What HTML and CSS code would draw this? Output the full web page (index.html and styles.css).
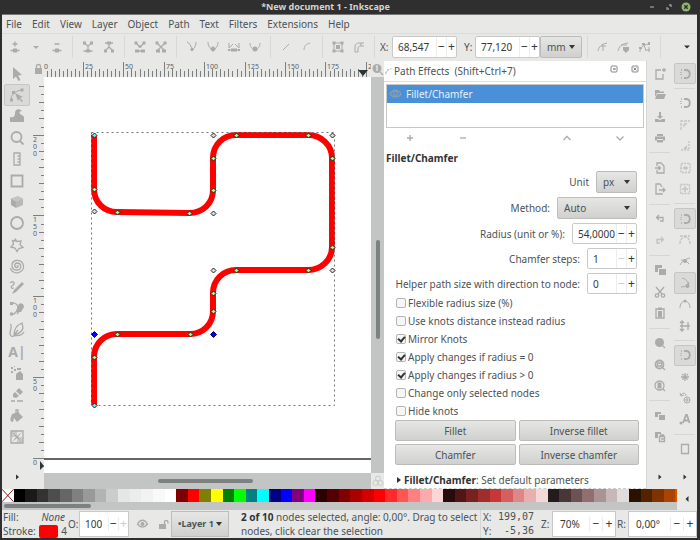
FILE: index.html
```
<!DOCTYPE html>
<html lang="en">
<head>
    <meta charset="UTF-8" />
    <meta name="viewport" content="width=device-width, initial-scale=1" />
    <title>*New document 1 - Inkscape</title>
    <link rel="stylesheet" href="styles.css">
</head>
<body>
<div class="window">

    <header class="titlebar">
        <h1>*New document 1 - Inkscape</h1>
        <div class="window-buttons">
            <button aria-label="Minimize"><svg class="icon" viewBox="0 0 16 16"><path d="M6 8h4" /></svg></button>
            <button aria-label="Restore"><svg class="icon" viewBox="0 0 16 16"><path d="M8 6h2v2M6 8v2h2" /></svg></button>
            <button aria-label="Close"><svg class="icon" viewBox="0 0 16 16"><circle cx="8" cy="8" r="4.5" fill="#8fb573" stroke="none" /><path d="M6.300 6.300l3.400 3.400M9.700 6.300L6.300 9.700" stroke="#2e2e2e" /></svg></button>
        </div>
    </header>

    <nav class="menubar">
        <a href="#">File</a>
        <a href="#">Edit</a>
        <a href="#">View</a>
        <a href="#">Layer</a>
        <a href="#">Object</a>
        <a href="#">Path</a>
        <a href="#">Text</a>
        <a href="#">Filters</a>
        <a href="#">Extensions</a>
        <a href="#">Help</a>
    </nav>

    <!-- Node tool controls -->
    <div class="toolbar">
        <button aria-label="Insert node"><svg class="icon" viewBox="0 0 16 16"><path d="M8 2.500v5M5.500 5h5M3.500 11.500h9" /><path class="fill" d="M6 9.500h4v4H6z" /></svg></button>
        <button aria-label="Insert node options"><svg class="icon" viewBox="0 0 16 16"><path class="fill" d="M5 7h6l-3 3z" /></svg></button>
        <button aria-label="Delete node"><svg class="icon" viewBox="0 0 16 16"><path d="M5.500 5h5M3.500 11.500h9" /><path class="fill" d="M6 9.500h4v4H6z" /></svg></button>
        <span class="sep"></span>
        <button aria-label="Join nodes"><svg class="icon" viewBox="0 0 16 16"><path d="M4 4l4 3 4-3M8 7v4M3.500 12h9" /><path class="fill" d="M3 2.500h3v3H3zM10 2.500h3v3h-3zM6 10.500h4v3H6z" /></svg></button>
        <button aria-label="Break path"><svg class="icon" viewBox="0 0 16 16"><path d="M4 12l4-4 4 4M8 8V5M4 4h8" /><path class="fill" d="M6 2.500h4v3H6zM3 10.500h3v3H3zM10 10.500h3v3h-3z" /></svg></button>
        <span class="sep"></span>
        <button aria-label="Join with segment"><svg class="icon" viewBox="0 0 16 16"><path d="M4 4l4 4 4-4M3 12h10M8 8v1" /><path class="fill" d="M2.500 2.500h3v3h-3zM10.500 2.500h3v3h-3zM3 10.500h4v3H3zM9 10.500h4v3H9zM6.500 6.500h3v2h-3z" /></svg></button>
        <button aria-label="Delete segment"><svg class="icon" viewBox="0 0 16 16"><path d="M4 4l4 4 4-4M8 8l-4 4M8 8l4 4" /><path class="fill" d="M2.500 2.500h3v3h-3zM10.500 2.500h3v3h-3zM3 10.500h4v3H3zM9 10.500h4v3H9z" /></svg></button>
        <span class="sep"></span>
        <button aria-label="Corner node"><svg class="icon thin" viewBox="0 0 16 16"><path d="M3 3c3 1 4 4 5 8 3-2 4-5 4-8" /><path class="fill" d="M8 8.500l2 2-2 2-2-2z" /></svg></button>
        <button aria-label="Smooth node"><svg class="icon thin" viewBox="0 0 16 16"><path d="M3 3c0 4 2 7 5 7s5-3 5-7" /><path class="fill" d="M8 7l3 3-3 3-3-3z" /></svg></button>
        <button aria-label="Symmetric node"><svg class="icon thin" viewBox="0 0 16 16"><path d="M3 4v5l4-4M13 4v5L9 5M3 11h10" /><path class="fill" d="M5 9.500h6v3H5zM2 10h2v2H2zM12 10h2v2h-2z" /></svg></button>
        <button aria-label="Auto-smooth node"><svg class="icon thin" viewBox="0 0 16 16"><path d="M3 4c0 4 2 6 5 6s5-2 5-6" /><circle class="fill" cx="8" cy="10" r="2.500" /></svg></button>
        <span class="sep"></span>
        <button aria-label="Make line"><svg class="icon thin" viewBox="0 0 16 16"><path d="M5 11l6-6" /></svg></button>
        <button aria-label="Make curve"><svg class="icon thin" viewBox="0 0 16 16"><path d="M5 11c0-4 2-6 6-7" /></svg></button>
        <span class="sep"></span>
        <button aria-label="Object to path"><svg class="icon thin" viewBox="0 0 16 16"><path d="M4 4h8v8H4z" /><path class="fill" d="M6 6h4v4H6zM2.500 2.500h3v3h-3zM10.500 2.500h3v3h-3zM2.500 10.500h3v3h-3zM10.500 10.500h3v3h-3z" /></svg></button>
        <button aria-label="Stroke to path"><svg class="icon thin" viewBox="0 0 16 16"><path d="M4 13V8c0-3 2-4 4-4h5M7 13V9c0-1 1-2 2-2h4M4 13h3M10 4v3" /></svg></button>
        <span class="sep"></span>
        <label for="x">X:</label>
        <span class="spin spin-coord"><input type="text" id="x" value="68,547"><button aria-label="Less">−</button><button aria-label="More">+</button></span>
        <label for="y" class="label-y">Y:</label>
        <span class="spin spin-coord"><input type="text" id="y" value="77,120"><button aria-label="Less">−</button><button aria-label="More">+</button></span>
        <span class="combo combo-unit"><select aria-label="Unit"><option>mm</option></select></span>
        <span class="sep"></span>
        <button aria-label="Edit clip"><svg class="icon thin" viewBox="0 0 16 16"><path d="M3 12c1-4 3-7 9-8M8 6v6M6 7h5" /></svg></button>
        <button aria-label="Edit mask"><svg class="icon thin" viewBox="0 0 16 16"><path d="M2 12c1-4 3-7 10-8M5 6h6" /><path class="fill" d="M7 8h6v3l-3 3-3-3z" /></svg></button>
        <button aria-label="Next effect parameter"><svg class="icon thin" viewBox="0 0 16 16"><path d="M3 13c0-4 2-7 9-8M7 6l2 6M9 11h4M12 8v5" /><path class="fill" d="M2 8h3v2H2zM5 4h3v2H5zM11 3h2v3h-2z" /></svg></button>
        <span class="sep"></span>
        <button class="overflow" aria-label="More options"><svg class="icon" viewBox="0 0 16 16"><path class="fill" d="M5 6.500h6l-3 3z" /></svg></button>
    </div>

    <main class="workspace">

        <nav class="rail tools">
            <div class="rail-list">
                <button aria-label="Select"><svg class="icon" viewBox="0 0 16 16"><path class="fill" d="M4 1l9 8-4 .500 2.500 4.500-2 1L7 10.500 4 13z" /></svg></button>
                <button class="pressed" aria-label="Edit nodes"><svg class="icon thin" viewBox="0 0 16 16"><path d="M2 13C2 8 5 4 13 3" /><path class="fill" d="M6 6l8 4-3 1 3 3-1 1-3-3-1 2zM11.500 1.500h3v3h-3zM1 11.500h3v3H1zM3 4h3v3H3z" /></svg></button>
                <button aria-label="Tweak"><svg class="icon" viewBox="0 0 16 16"><path class="fill" d="M1 9c4 1 5-1 5-4 0-4 4-5 7-2-2 0-3 1-2 3 1 1 3 1 4 3v5H1z" /></svg></button>
                <button aria-label="Zoom"><svg class="icon bold" viewBox="0 0 16 16"><circle cx="7.500" cy="7" r="5" /><path d="M11 11l3.500 3.500" /></svg></button>
                <button aria-label="Measure"><svg class="icon" viewBox="0 0 16 16"><path d="M5 2h6v12H5zM8.500 5H11M8.500 8H11M8.500 11H11" /></svg></button>
                <button aria-label="Rectangle"><svg class="icon bold" viewBox="0 0 16 16"><path d="M2.500 2.500h11v11h-11z" /></svg></button>
                <button aria-label="3D box"><svg class="icon" viewBox="0 0 16 16"><path class="fill" opacity=".6" d="M2 4.500L9 2l5 2.500L7 7.500z" /><path class="fill" d="M2 4.500l5 3V14l-5-3z" /><path class="fill" opacity=".8" d="M7 7.500l7-3V11l-7 3z" /></svg></button>
                <button aria-label="Ellipse"><svg class="icon bold" viewBox="0 0 16 16"><circle cx="8" cy="8" r="6" /></svg></button>
                <button aria-label="Star"><svg class="icon" viewBox="0 0 16 16"><path d="M6 1.500l2 3 4-.500-1 3.500 3 3-4 1-2 3-2-3.500-4-1 2.500-3-1-3.500 3 .500z" /></svg></button>
                <button aria-label="Spiral"><svg class="icon" viewBox="0 0 16 16"><path d="M8 8c1-1 2 1 0 1.500-3 0-3-4 0-4.500 5 0 5 7 0 7-6 0-7-8-1-9.500 8-1 10 9 4 11.500-4 2-9 0-9.500-4" /></svg></button>
                <button aria-label="Pencil"><svg class="icon" viewBox="0 0 16 16"><path d="M1 3c2-3 6 0 3 2s-2 4 1 3" /><path class="fill" d="M13 2l2 2-8 8-4 2 2-4z" /></svg></button>
                <button aria-label="Pen"><svg class="icon" viewBox="0 0 16 16"><path d="M2 2h3c7 2 3 9 0 11H2" /><path class="fill" d="M1 1h3v3H1zM1 11.500h3v3H1zM10 3c2-2 5 0 5 3l-3 5H8V7z" /><path d="M8 13l3-4" /></svg></button>
                <button aria-label="Calligraphy"><svg class="icon" viewBox="0 0 16 16"><path d="M1 2c3 1 0 6 0 9s2 4 4 3c3-1 7 1 10-4M5 13c0-6 3-10 8-12l1 5c-1 4-5 6-9 7zM5 13l4-5" /></svg></button>
                <button class="text-tool" aria-label="Text">A|</button>
                <button aria-label="Spray"><svg class="icon" viewBox="0 0 16 16"><path class="fill" d="M7 9l4-3 3 3v6H7zM8 3h4v2H8zM2 2h2v2H2zM5 4h2v2H5zM2 6h2v2H2zM5 1h1v1H5z" /></svg></button>
                <button aria-label="Eraser"><svg class="icon" viewBox="0 0 16 16"><path class="fill" d="M10 1l4 4-3 3-4-4zM6 5l4 4-3 2-3-1V7z" /><path d="M2 14h4M8 14h6" /></svg></button>
                <button aria-label="Paint bucket"><svg class="icon" viewBox="0 0 16 16"><path class="fill" d="M3 6l6-2 5 5-6 5-3-4-1 4c-3 0-3-3-2-5z" /><path d="M7 7V2h2v5" /></svg></button>
                <button aria-label="Gradient"><svg class="icon" viewBox="0 0 16 16"><path d="M2 2h12v12H2z" /><path class="fill" d="M2 2h6v6H2zM8 8h6v6H8z" opacity=".5" /><path class="fill" d="M3 3l5 4 5-4-4 5 4 5-5-4-5 4 4-5z" /></svg></button>
            </div>
            <button class="rail-more" aria-label="More tools"><svg class="icon" viewBox="0 0 16 16"><path class="fill" d="M7 5.500l3 2.500-3 2.500z" /></svg></button>
        </nav>

        <section class="editor">
            <div class="corner"><svg class="icon" viewBox="0 0 16 16"><path class="fill" d="M5 7h7v6H5z" /><path d="M6.500 7V5c0-2 4-2 4 0v2" /></svg></div>
            <svg class="ruler ruler-top" id="rulerTop"></svg>
            <div class="corner"><svg class="icon" viewBox="0 0 16 16"><circle class="fill" cx="7" cy="7.500" r="4.500" /><path d="M10 11l3 3" /><path d="M6 6l1-1v5" stroke="#e8e8e7" /></svg></div>

            <svg class="ruler ruler-left" id="rulerLeft"></svg>
            <svg class="canvas" id="canvas">
                <path class="page-edge" d="M0 382h2000" />
                <path class="stroke" d="M50 58V112C50 125 60 135 73 135L145 136C159 136 169 126 169 113V81C169 68 179 58 192 58H264C277 58 288 68 288 81V170C288 183 277 193 264 193H192C179 193 169 203 169 216V234C169 247 159 257 146 257H73C60 257 50 267 50 280V328" />
                <rect class="bbox" x="47.500" y="55.500" width="243" height="273" />
            </svg>
            <div class="scroll-v"><span></span></div>

            <div class="corner"></div>
            <div class="scroll-h"><span></span></div>
            <div class="corner cms"><svg class="icon thin" viewBox="0 0 16 16"><circle cx="8" cy="5.500" r="2.500" /><circle cx="5.500" cy="10" r="2.500" /><circle cx="10.500" cy="10" r="2.500" /></svg></div>
        </section>

        <!-- Path effects dialog -->
        <section class="panel">
            <header class="panel-head">
                <svg class="icon thin" viewBox="0 0 16 16"><path d="M3 14c0-5 3-9 10-10" stroke-dasharray="3 1" /><path class="fill" d="M2 9h2v2H2zM5 5h2v2H5z" /></svg>
                <h2>Path Effects&nbsp; (Shift+Ctrl+7)</h2>
                <button aria-label="Iconify"><svg class="icon" viewBox="0 0 16 16"><rect x="5" y="5" width="6" height="6" rx="1" /><path d="M7 8h3M8 7v2" /></svg></button>
                <button aria-label="Close dialog"><svg class="icon" viewBox="0 0 16 16"><rect x="5" y="5" width="6" height="6" rx="1" /><path d="M6.500 6.500l3 3M9.500 6.500l-3 3" /></svg></button>
            </header>

            <div class="effects">
                <div class="effect">
                    <svg class="icon" viewBox="0 0 16 16"><path d="M3 8c3-5 8-5 11 0-3 4-8 4-11 0z" /><circle cx="8.500" cy="7.500" r="2" /></svg>
                    Fillet/Chamfer
                </div>
            </div>
            <div class="effect-actions">
                <button aria-label="Add effect"><svg class="icon" viewBox="0 0 16 16"><path d="M8 5v6M5 8h6" /></svg></button>
                <button aria-label="Remove effect"><svg class="icon" viewBox="0 0 16 16"><path d="M5 8h6" /></svg></button>
                <span></span>
                <button aria-label="Raise"><svg class="icon" viewBox="0 0 16 16"><path d="M4.500 10L8 6.500 11.500 10" /></svg></button>
                <button aria-label="Lower"><svg class="icon" viewBox="0 0 16 16"><path d="M4.500 6.500L8 10l3.500-3.500" /></svg></button>
            </div>

            <h3>Fillet/Chamfer</h3>

            <form class="params">
                <div class="row">
                    <label for="unit">Unit</label>
                    <span class="combo combo-px"><select id="unit"><option>px</option></select></span>
                </div>
                <div class="row">
                    <label for="method">Method:</label>
                    <span class="combo combo-method"><select id="method"><option>Auto</option></select></span>
                </div>
                <div class="row">
                    <label for="radius">Radius (unit or %):</label>
                    <span class="spin spin-radius"><input type="text" id="radius" value="54,0000"><button type="button" aria-label="Less">−</button><button type="button" aria-label="More">+</button></span>
                </div>
                <div class="row">
                    <label for="steps">Chamfer steps:</label>
                    <span class="spin spin-small"><input type="text" id="steps" value="1"><button type="button" aria-label="Less" disabled>−</button><button type="button" aria-label="More">+</button></span>
                </div>
                <div class="row">
                    <label for="helper">Helper path size with direction to node:</label>
                    <span class="spin spin-small"><input type="text" id="helper" value="0"><button type="button" aria-label="Less" disabled>−</button><button type="button" aria-label="More">+</button></span>
                </div>
                <div class="checks">
                    <label><input type="checkbox">Flexible radius size (%)</label>
                    <label><input type="checkbox">Use knots distance instead radius</label>
                    <label><input type="checkbox" checked>Mirror Knots</label>
                    <label><input type="checkbox" checked>Apply changes if radius = 0</label>
                    <label><input type="checkbox" checked>Apply changes if radius &gt; 0</label>
                    <label><input type="checkbox">Change only selected nodes</label>
                    <label><input type="checkbox">Hide knots</label>
                </div>
                <div class="actions">
                    <button type="button">Fillet</button>
                    <button type="button">Inverse fillet</button>
                    <button type="button">Chamfer</button>
                    <button type="button">Inverse chamfer</button>
                </div>
            </form>

            <details>
                <summary><b>Fillet/Chamfer</b>: Set default parameters</summary>
            </details>
        </section>

        <nav class="rail commands">
            <div class="rail-list">
                <button aria-label="New"><svg class="icon" viewBox="0 0 16 16"><path d="M9 4H4v9h7V8M12 2v4M10 4h4" /></svg></button>
                <button aria-label="Open"><svg class="icon" viewBox="0 0 16 16"><path class="fill" d="M3 3h4l1 1.500h4V6H5l-2 4zM5 7h9l-2 5H3z" /></svg></button>
                <button aria-label="Save"><svg class="icon" viewBox="0 0 16 16"><path class="fill" d="M7 3h2v4h2L8 10 5 7h2zM3 10h3l2 1.500 2-1.500h3v3H3z" /></svg></button>
                <button aria-label="Print"><svg class="icon" viewBox="0 0 16 16"><path class="fill" d="M5 4h6v2H5zM3 6.500h10v4h-2V9H5v1.500H3zM5 10h6v2.500H5z" /></svg></button>
                <hr>
                <button aria-label="Import"><svg class="icon" viewBox="0 0 16 16"><path d="M5 6V3h4l3 3v7H5v-3M3 8h5M6.500 6l2 2-2 2" /></svg></button>
                <button aria-label="Export"><svg class="icon" viewBox="0 0 16 16"><path d="M10 6L8 3H4v10h6v-1M7 9h6M11 7l2 2-2 2" /></svg></button>
                <hr>
                <button aria-label="Undo"><svg class="icon" viewBox="0 0 16 16"><path d="M7 4L4.500 6.500 7 9M5 6.500h6v3.500H8" /></svg></button>
                <button class="dim" aria-label="Redo"><svg class="icon" viewBox="0 0 16 16"><path d="M9 4l2.500 2.500L9 9M11 6.500H5V10h3" /></svg></button>
                <hr>
                <button aria-label="Copy"><svg class="icon" viewBox="0 0 16 16"><path class="fill" d="M3 3h7v3H6v4H3zM7 7h7v6H7z" /></svg></button>
                <button aria-label="Cut"><svg class="icon" viewBox="0 0 16 16"><path d="M4 3l6 7M12 3l-6 7" /><circle cx="5" cy="11.500" r="1.700" /><circle cx="11" cy="11.500" r="1.700" /></svg></button>
                <button aria-label="Paste"><svg class="icon" viewBox="0 0 16 16"><path d="M4 4h8v9H4z" /><path class="fill" d="M6 2.500h4V5H6zM6 6h4v6H6z" /></svg></button>
                <hr>
                <button aria-label="Zoom selection"><svg class="icon" viewBox="0 0 16 16"><circle class="fill" cx="7.500" cy="7.500" r="4.500" /><path d="M10.500 10.500l2.500 2.500" /></svg></button>
                <button aria-label="Zoom drawing"><svg class="icon" viewBox="0 0 16 16"><circle class="bold" cx="7.500" cy="7.500" r="4" /><path d="M5.500 6h4v3h-4zM10.500 10.500l2.500 2.500" /></svg></button>
                <button aria-label="Zoom page"><svg class="icon" viewBox="0 0 16 16"><circle cx="7.500" cy="7.500" r="4.500" /><path class="fill" d="M5.500 4.500h4v6h-4z" /><path d="M10.500 10.500l2.500 2.500" /></svg></button>
                <hr>
                <button aria-label="Duplicate"><svg class="icon" viewBox="0 0 16 16"><path class="fill" d="M3 4h6v2H6v3H3zM7 7h6v5H7z" /></svg></button>
                <button aria-label="Clone"><svg class="icon" viewBox="0 0 16 16"><path class="fill" d="M3 3h6v2H6v4H3z" /><path d="M7.500 7.500h5v5h-5zM8.500 7.500V6h3v1.500M9 10h3" /></svg></button>
            </div>
            <button class="rail-more" aria-label="More commands"><svg class="icon" viewBox="0 0 16 16"><path class="fill" d="M6.500 5.500l3 2.500-3 2.500z" /></svg></button>
        </nav>

        <nav class="rail snap">
            <div class="rail-list">
                <button class="pressed" aria-label="Enable snapping"><svg class="icon" viewBox="0 0 16 16"><path d="M7 4h2c5 0 5 8 0 8H7" class="bold" /><path d="M4 4h2M4 12h2M4 6v4" stroke-dasharray="1 1" /></svg></button>
                <hr>
                <button aria-label="Snap bounding boxes"><svg class="icon" viewBox="0 0 16 16"><path d="M7 4h2c5 0 5 8 0 8H7" class="bold" /><path d="M4 4h2M4 12h2M4 6v4" stroke-dasharray="1 1" /></svg></button>
                <button class="dim" aria-label="Snap to edges"><svg class="icon" viewBox="0 0 16 16"><path d="M4 13V4h9M7 7h3M7 7v3" stroke-dasharray="3 1" /></svg></button>
                <button class="dim" aria-label="Snap to corners"><svg class="icon" viewBox="0 0 16 16"><path d="M12 3v9H3" stroke-dasharray="2 1" /><path class="fill" d="M6 11l4-4v4z" /></svg></button>
                <button class="dim" aria-label="Snap to midpoints"><svg class="icon" viewBox="0 0 16 16"><path d="M4 3.500h9v9H4zM3 8h8" stroke-dasharray="2 1" /><path class="fill" d="M7 6.500h3v3H7z" /></svg></button>
                <button class="dim" aria-label="Snap to centers"><svg class="icon" viewBox="0 0 16 16"><path d="M3.500 3.500h9v9h-9z" stroke-dasharray="2 1" /><path d="M8 5v6M5 8h6" /></svg></button>
                <hr>
                <button class="pressed" aria-label="Snap nodes"><svg class="icon" viewBox="0 0 16 16"><path d="M7 4h2c5 0 5 8 0 8H7" class="bold" /><path d="M4 4h2M4 12h2M4 6v4" stroke-dasharray="1 1" /></svg></button>
                <button class="dim" aria-label="Snap to paths"><svg class="icon" viewBox="0 0 16 16"><path d="M3 12c0-4 2-7 5-7s5 3 5 7M3 4h10" stroke-dasharray="3 1" /></svg></button>
                <button aria-label="Snap to intersections"><svg class="icon thin" viewBox="0 0 16 16"><path d="M3 12c3-5 6-6 10-7M4 7c3 0 6 1 8 4" /><circle class="fill" cx="8" cy="8" r="2" /></svg></button>
                <button class="pressed" aria-label="Snap to cusp nodes"><svg class="icon thin" viewBox="0 0 16 16"><path d="M5 3c4 1 6 3 6 7-2 1-4 2-7 2M12 7l-2 6" /><circle class="fill" cx="10.500" cy="11" r="2" /></svg></button>
                <button aria-label="Snap to smooth nodes"><svg class="icon thin" viewBox="0 0 16 16"><path d="M3 12c0-9 10-9 10 0" /><circle class="fill" cx="8" cy="5" r="1.500" /></svg></button>
                <button aria-label="Snap to midpoints of lines"><svg class="icon" viewBox="0 0 16 16"><path d="M5 3v10M11 4v8M3 8h10M3 5l2-2 2 2M3 11l2 2 2-2" /></svg></button>
                <hr>
                <button class="pressed" aria-label="Snap others"><svg class="icon" viewBox="0 0 16 16"><path d="M7 4h2c5 0 5 8 0 8H7" class="bold" /><path d="M4 4h2M4 12h2M4 6v4" stroke-dasharray="1 1" /></svg></button>
                <button aria-label="Snap to object centers"><svg class="icon" viewBox="0 0 16 16"><path d="M8 4v8M4 8h8M5 5l6 6M11 5l-6 6" stroke-dasharray="2 1" /><circle class="fill" cx="8" cy="8" r="2" /></svg></button>
                <button aria-label="Snap to rotation centers"><svg class="icon thin" viewBox="0 0 16 16"><path d="M4 5c2-3 5-2 5 1M3 3l1 3 3-1" /><circle cx="10" cy="10" r="3" /><path d="M10 8v4M8 10h4" /></svg></button>
                <button aria-label="Snap to text baselines"><svg class="icon bold" viewBox="0 0 16 16"><path d="M6 12l3-8h1l2.500 8M7 9.500h5" /><circle class="fill" cx="4" cy="12" r="1.500" /></svg></button>
                <hr>
                <button aria-label="Snap to page border"><svg class="icon" viewBox="0 0 16 16"><path d="M4.500 3.500h7v9h-7z" /></svg></button>
            </div>
            <button class="rail-more" aria-label="More snapping"><svg class="icon" viewBox="0 0 16 16"><path class="fill" d="M6.500 5.500l3 2.500-3 2.500z" /></svg></button>
        </nav>
    </main>

    <div class="palette">
        <div class="palette-main">
            <div class="swatches" id="swatches">
                <button class="no-color" aria-label="None"><svg viewBox="0 0 12 13"><path d="M0 0l12 13M12 0L0 13" /></svg></button>
            </div>
            <div class="palette-scroll"><span></span></div>
        </div>
        <button class="palette-menu" aria-label="Palette menu"><svg class="icon" viewBox="0 0 16 16"><path class="fill" d="M9.500 5v6l-3-3z" /></svg></button>
    </div>

    <footer class="statusbar">
        <dl class="style">
            <dt>Fill:</dt><dd><i>None</i></dd>
            <dt>Stroke:</dt><dd><span class="stroke-color"></span>4</dd>
        </dl>
        <label for="opacity">O:</label>
        <span class="spin spin-opacity"><input type="text" id="opacity" value="100"><button aria-label="Less">−</button><button aria-label="More" disabled>+</button></span>
        <button class="layer-icon" aria-label="Toggle layer visibility"><svg class="icon" viewBox="0 0 16 16"><path d="M3.500 8c3-5 7-5 10 0-3 4-7 4-10 0z" /><circle class="fill" cx="8.500" cy="8" r="2" /></svg></button>
        <button class="layer-icon" aria-label="Toggle layer lock"><svg class="icon" viewBox="0 0 16 16"><path class="fill" d="M4 8h7v5H4z" /><path d="M9.500 8V6c0-2 3.500-2 3.500 0v1.500" /></svg></button>
        <span class="combo combo-layer"><select aria-label="Layer"><option>•Layer 1</option></select></span>
        <p class="message"><b>2 of 10</b> nodes selected, angle: 0,00°. Drag to select nodes, click clear the selection</p>
        <dl class="pointer">
            <dt>X:</dt><dd>199,07</dd>
            <dt>Y:</dt><dd>-5,36</dd>
        </dl>
        <label for="zoom">Z:</label>
        <span class="spin spin-zoom"><input type="text" id="zoom" value="70%"><button aria-label="Less">−</button><button aria-label="More">+</button></span>
        <label for="rotate">R:</label>
        <span class="spin spin-rotate"><input type="text" id="rotate" value="0,00°"><button aria-label="Less">−</button><button aria-label="More">+</button></span>
    </footer>

</div>
<script src="script.js"></script>
</body>
</html>
```
FILE: styles.css
```
* {
    margin: 0;
    padding: 0;
    box-sizing: border-box;
}
body {
    font-family: "Noto Sans", "Open Sans", sans-serif;
    font-size: 10px;
    line-height: 14px;
    color: #4b5356;
    background-color: #2f2f2f;
}
button, input, select {
    font: inherit;
    color: inherit;
    border: none;
    background: none;
    outline: none;
}
a {
    color: inherit;
    text-decoration: none;
}
.window {
    display: flex;
    flex-direction: column;
    min-height: 100vh;
    padding: 0 3px 2px 2px;
}
.icon {
    display: block;
    flex: none;
    width: 16px;
    height: 16px;
    fill: none;
    stroke: #ababaa;
    stroke-width: 1.3;
}
.icon.thin {
    stroke-width: 1;
}
.icon.bold, .icon .bold {
    stroke-width: 1.8;
}
.icon .fill {
    fill: #ababaa;
    stroke: none;
}

/* Title and menu */
.titlebar {
    position: relative;
    display: flex;
    align-items: center;
    justify-content: center;
    height: 15px;
    color: #d4d4d4;
    border-bottom: 1px solid #777;
}
.titlebar h1 {
    padding-right: 48px;
    font-size: 9px;
    font-weight: 700;
}
.window-buttons {
    position: absolute;
    right: 3px;
    display: flex;
    gap: 1px;
}
.window-buttons .icon {
    stroke: #9a9a9a;
}
.menubar {
    display: flex;
    align-items: center;
    gap: 10px;
    height: 19px;
    padding-left: 4px;
    background-color: #e8e8e7;
    border-bottom: 1px solid #dbdbda;
}

/* Toolbar */
.toolbar {
    display: flex;
    align-items: center;
    height: 27px;
    padding: 0 0 1px 2px;
    background-color: #e8e8e7;
}
.toolbar > button {
    display: flex;
    justify-content: center;
    width: 21px;
}
.sep {
    width: 10px;
    height: 22px;
    background: linear-gradient(#d8d8d7, #d8d8d7) center / 1px 100% no-repeat;
}
.toolbar label {
    width: 13px;
    padding-left: 1px;
}
.toolbar .label-y {
    width: 18px;
    padding-left: 7px;
}
.toolbar .overflow {
    margin-left: auto;
}
.toolbar .overflow .fill, .rail-more .fill, .palette-menu .fill {
    fill: #2e3436;
}

/* Spin boxes and drop-downs */
.spin {
    display: flex;
    height: 21px;
    color: #33393b;
    background-color: #fff;
    border: 1px solid #c9c9c7;
    border-radius: 2px;
}
.spin input {
    flex: 1;
    min-width: 0;
    padding-left: 5px;
}
.spin button {
    width: 10px;
    font-size: 12px;
    text-align: center;
    border-left: 1px solid #ededec;
}
.spin button:disabled {
    color: #ccc;
}
.spin-coord {
    width: 65px;
    height: 22px;
}
.combo {
    position: relative;
    height: 22px;
    border: 1px solid #bcbcba;
    border-radius: 2px;
    background: linear-gradient(#e6e6e5, #d0d0ce);
}
.combo::after {
    content: "";
    position: absolute;
    right: 6px;
    top: 8px;
    border: 3px solid transparent;
    border-top: 4px solid #33393b;
    border-bottom: none;
    pointer-events: none;
}
.combo select {
    width: 100%;
    height: 100%;
    padding-left: 6px;
    appearance: none;
}
.combo-unit {
    width: 42px;
}
.combo-px {
    width: 41px;
}
.combo-method {
    width: 80px;
}
.combo-layer {
    width: 58px;
    font-size: 9px;
    font-weight: 700;
}
.spin-radius {
    width: 65px;
}
.spin-small {
    width: 50px;
}

/* Workspace */
.workspace {
    flex: 1;
    display: grid;
    grid-template-columns: 30px 1fr 262px 26px 25px;
    background-color: #e8e8e7;
}
.rail {
    display: flex;
    flex-direction: column;
    padding-top: 2px;
}
.rail-list {
    flex: 1;
    display: flex;
    flex-direction: column;
}
.rail button {
    flex: 21 1 0;
    display: flex;
    align-items: center;
    justify-content: center;
    margin: 0 2px;
    border: 1px solid transparent;
    border-radius: 2px;
}
.rail button.pressed {
    background-color: #dadad8;
    border-color: #c6c6c4;
}
.rail button.dim {
    opacity: 0.6;
}
.rail hr {
    flex: 9 1 0;
    border: none;
    margin: 0 2px;
    background: linear-gradient(#d6d6d4, #d6d6d4) center / 100% 1px no-repeat;
}
.rail .rail-more {
    flex: none;
    height: 24px;
    margin-top: 17px;
}
.snap .rail-more {
    margin-top: 5px;
}
.snap button {
    margin: 0 1px 0 2px;
}
.rail .text-tool {
    font-size: 14px;
    font-weight: 700;
    color: #ababaa;
}
.commands {
    border-left: 1px solid #d6d6d4;
}

/* Drawing area */
.editor {
    display: grid;
    grid-template-columns: 12px 1fr 13px;
    grid-template-rows: 16px 1fr 16px;
}
.corner {
    display: flex;
    align-items: center;
    justify-content: center;
    overflow: hidden;
}
.ruler, .canvas {
    display: block;
    width: 100%;
    height: 100%;
    overflow: hidden;
}
.ruler path {
    stroke: #7b7f80;
    stroke-width: 1;
}
.ruler text {
    font-size: 7px;
    fill: #5c6365;
}
.ruler .marker {
    fill: #2e3436;
    stroke: none;
}
.canvas {
    background-color: #fff;
}
.page-edge {
    stroke: #666;
    stroke-width: 2;
}
.stroke {
    fill: none;
    stroke: #f00;
    stroke-width: 6;
}
.bbox {
    fill: none;
    stroke: #777;
    stroke-width: 1;
    stroke-dasharray: 2 3;
}
.knot {
    stroke: #222;
    stroke-width: 1;
}
.knot-node {
    fill: #ddd;
}
.knot-effect {
    fill: #9f9;
}
.knot-end {
    fill: #6ee;
}
.knot-selected {
    fill: #00f;
    stroke: #006;
}
.scroll-v, .scroll-h, .palette-scroll {
    display: flex;
    background-color: #c3c5c4;
}
.scroll-v {
    justify-content: center;
}
.scroll-v span {
    width: 4px;
    height: 25%;
    margin-top: 163px;
    border-radius: 2px;
    background-color: #7c8181;
}
.scroll-h {
    align-items: center;
}
.scroll-h span {
    width: 29%;
    height: 4px;
    margin-left: 35%;
    border-radius: 2px;
    background-color: #7c8181;
}
.cms {
    opacity: 0.5;
}

/* Path effects panel */
.panel {
    display: flex;
    flex-direction: column;
    background-color: #fff;
    border-bottom: 1px dashed #ccc;
}
.panel-head {
    display: flex;
    align-items: center;
    height: 21px;
    padding-right: 3px;
    border-bottom: 1px solid #dcdcda;
}
.panel-head > .icon {
    width: 10px;
}
.panel-head h2 {
    flex: 1;
    font-size: 10px;
    font-weight: 400;
}
.panel-head button {
    margin-bottom: 5px;
    margin-left: 5px;
}
.panel-head button .icon {
    stroke: #888;
    stroke-width: 1;
}
.effects {
    height: 44px;
    margin: 2px 2px 0;
    border: 1px solid #c9c9c7;
}
.effect {
    display: flex;
    align-items: center;
    gap: 3px;
    height: 18px;
    color: #e8f1fa;
    background-color: #4a90d9;
}
.effect .icon {
    stroke: #8a9cab;
}
.effect-actions {
    display: grid;
    grid-template-columns: repeat(5, 1fr);
    height: 20px;
    align-items: center;
}
.effect-actions button {
    justify-self: center;
}
.panel h3 {
    height: 23px;
    padding: 3px 2px 0;
    font-size: 10px;
    font-weight: 700;
    color: #2e3436;
}
.params {
    display: flex;
    flex-direction: column;
    gap: 4px;
    padding-right: 9px;
}
.row {
    display: flex;
    align-items: center;
    justify-content: flex-end;
    gap: 7px;
}
.checks {
    display: flex;
    flex-direction: column;
    margin-top: -4px;
    padding-left: 12px;
}
.checks label {
    display: flex;
    align-items: center;
    gap: 2px;
    height: 18px;
}
.checks input {
    position: relative;
    width: 10px;
    height: 10px;
    border: 1px solid #b5b5b3;
    border-radius: 2px;
    background-color: #f6f6f5;
    appearance: none;
}
.checks input:checked::after {
    content: "";
    position: absolute;
    left: 2px;
    top: 0;
    width: 3px;
    height: 5px;
    border: solid #2e3436;
    border-width: 0 2px 2px 0;
    transform: rotate(40deg);
}
.actions {
    display: grid;
    grid-template-columns: 1fr 1fr;
    gap: 3px;
    margin: -4px -2px 0 11px;
}
.actions button {
    height: 21px;
    border: 1px solid #bcbcba;
    border-radius: 2px;
    background: linear-gradient(#e6e6e5, #d0d0ce);
}
details {
    margin-top: auto;
    padding: 0 0 1px 13px;
}
summary {
    display: flex;
    align-items: center;
    white-space: pre;
}
summary::before {
    content: "";
    margin-right: 3px;
    border: 3px solid transparent;
    border-left: 4px solid #2e3436;
    border-right: none;
}
summary b {
    color: #2e3436;
}

/* Palette */
.palette {
    display: flex;
    height: 21px;
    background-color: #e8e8e7;
}
.palette-main {
    flex: 1;
}
.swatches {
    display: flex;
    height: 13px;
}
.swatches button {
    flex: 1 1 0;
}
.swatches button:last-child {
    flex: 0 0 2px;
}
.swatches .no-color {
    background-color: #fff;
}
.no-color svg {
    display: block;
    width: 100%;
    height: 13px;
    stroke: #8b1a1a;
    stroke-width: 1;
}
.palette-scroll {
    height: 8px;
    padding: 2px;
}
.palette-scroll span {
    width: 13%;
    height: 4px;
    border-radius: 2px;
    background-color: #7c8181;
}
.palette-menu {
    display: flex;
    justify-content: center;
    width: 20px;
    padding-top: 2px;
}

/* Status bar */
.statusbar {
    display: flex;
    align-items: center;
    height: 28px;
    background-color: #e8e8e7;
}
.statusbar .spin, .statusbar .combo {
    height: 26px;
    border-radius: 0;
}
.statusbar .spin {
    align-items: center;
}
.statusbar .combo::after {
    top: 10px;
}
.style, .pointer {
    display: grid;
    grid-template-columns: auto 1fr;
}
.style {
    width: 65px;
    padding-left: 1px;
}
.style dd {
    display: flex;
    align-items: center;
    justify-content: flex-end;
    gap: 3px;
}
.style i {
    padding-right: 2px;
}
.stroke-color {
    flex: 0 0 19px;
    height: 13px;
    border-radius: 2px;
    background-color: #f00;
}
.spin-opacity {
    width: 50px;
}
.statusbar label {
    width: 12px;
    padding-left: 1px;
}
.layer-icon {
    padding-left: 5px;
}
.message {
    flex: 1;
    padding: 0 2px 0 12px;
}
.message b {
    color: #2e3436;
}
.pointer {
    width: 60px;
    padding: 0 6px 0 2px;
    border-left: 1px solid #d6d6d4;
}
.pointer dd {
    font-family: "DejaVu Sans Mono", monospace;
    text-align: right;
}
.spin-zoom {
    width: 64px;
}
.spin-rotate {
    width: 69px;
}
.spin-zoom input, .spin-rotate input {
    padding-left: 7px;
}
.spin-zoom button, .spin-rotate button {
    width: 13px;
}
```
FILE: script.js
```
const NS = "http://www.w3.org/2000/svg";

function add(parent, tag, attrs, text) {
    const el = document.createElementNS(NS, tag);
    for (const key in attrs) {
        el.setAttribute(key, attrs[key]);
    }
    if (text !== undefined) {
        el.textContent = text;
    }
    parent.appendChild(el);
}

// Rulers: pixels per mm at 70%
const MM = 1.617;
const rulerTop = document.getElementById("rulerTop");
const rulerLeft = document.getElementById("rulerLeft");
const rulerWidth = rulerTop.clientWidth || rulerTop.getBoundingClientRect().width;

for (let i = 1; i * 2.5 * MM < rulerWidth; i++) {
    const x = Math.round(i * 2.5 * MM - 1.5) + 0.5;
    const major = i % 10 === 0;
    const top = major ? 1 : (i % 2 ? 10 : 8);
    add(rulerTop, "path", { d: `M${x} ${top}V16` });
    if (major) {
        add(rulerTop, "text", { x: x + 1.5, y: 8 }, i * 2.5);
    }
}
add(rulerTop, "text", { x: 0, y: 8 }, 0);
add(rulerTop, "path", { class: "marker", d: "M314 9h10l-5 6z" });

for (let i = -1; i < 47; i++) {
    const y = Math.round(382 - i * 5 * MM) - 0.5;
    const major = i % 10 === 0;
    const left = major ? 1 : (i % 2 ? 9 : 7);
    add(rulerLeft, "path", { d: `M${left} ${y}H12` });
    if (major) {
        String(i * 5).split("").forEach((digit, n) => {
            add(rulerLeft, "text", { x: 1, y: y + 6 + n * 7 }, digit);
        });
    }
}
add(rulerLeft, "path", { class: "marker", d: "M8 384v9l4-4z" });

// Knots on the path
const knots = {
    node: [[50, 134], [169, 136], [169, 58], [288, 58], [169, 193], [288, 193]],
    effect: [[50, 112], [73, 135], [145, 136], [169, 113], [169, 81], [192, 58], [264, 58], [288, 81],
        [288, 170], [264, 193], [192, 193], [169, 216], [169, 234], [146, 257], [73, 257], [50, 280]],
    end: [[50, 58], [50, 328]],
    selected: [[50, 257], [169, 257]]
};
const canvas = document.getElementById("canvas");
for (const kind in knots) {
    const r = kind === "selected" ? 3 : 2.5;
    knots[kind].forEach(([x, y]) => {
        add(canvas, "path", { class: `knot knot-${kind}`, d: `M${x + 0.5} ${y + 0.5 - r}l${r} ${r}-${r} ${r}-${r}-${r}z` });
    });
}

// Inkscape default palette
const colors = [
    "000000", "1a1a1a", "333333", "4d4d4d", "666666", "808080", "999999", "b3b3b3", "cccccc", "e6e6e6", "ececec", "f2f2f2", "f9f9f9", "ffffff",
    "800000", "ff0000", "808000", "ffff00", "008000", "00ff00", "008080", "00ffff", "000080", "0000ff", "800080", "ff00ff",
    "2b0000", "550000", "800000", "aa0000", "d40000", "ff0000", "ff2a2a", "ff5555", "ff8080", "ffaaaa", "ffd5d5",
    "280b0b", "501616", "782121", "a02c2c", "c83737", "d35f5f", "de8787", "e9afaf", "f4d7d7",
    "241c1c", "483737", "6c5353", "916f6f", "ac9393", "c8b7b7", "e3dbdb",
    "2b1100", "552200", "803300", "aa4400", "d45500"
];
const swatches = document.getElementById("swatches");
colors.forEach(color => {
    const swatch = document.createElement("button");
    swatch.style.backgroundColor = "#" + color;
    swatch.setAttribute("aria-label", "#" + color);
    swatches.appendChild(swatch);
});
```
